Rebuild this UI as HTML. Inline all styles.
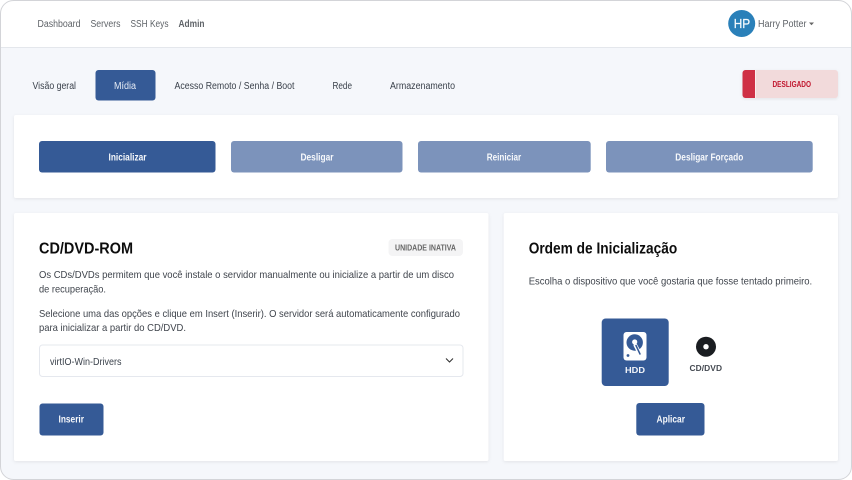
<!DOCTYPE html>
<html lang="pt">
<head>
<meta charset="utf-8">
<title>Mídia</title>
<style>
html,body{margin:0;padding:0;width:852px;height:480px;overflow:hidden;background:#fff}
svg{display:block}
text{font-family:"Liberation Sans",sans-serif;white-space:pre}
.n{font-size:10px;fill:#5f6368}
.t{font-size:10px;fill:#3a414b}
.p{font-size:10.4px;fill:#3f444c}
.b{font-size:9.8px;font-weight:700;fill:#f6f8fb}
.h{font-size:15.5px;font-weight:700;fill:#0d0d0d}
</style>
</head>
<body>
<svg width="852" height="480" viewBox="0 0 852 480" xmlns="http://www.w3.org/2000/svg">
<defs>
<filter id="s" x="-5%" y="-5%" width="110%" height="115%"><feDropShadow dx="0" dy="1" stdDeviation="1.5" flood-color="#000" flood-opacity=".08"/></filter>
<clipPath id="f"><rect x="0.5" y="0.5" width="851" height="479" rx="13"/></clipPath>
</defs>
<rect width="852" height="480" fill="#fff"/>
<g clip-path="url(#f)">
<rect width="852" height="480" fill="#f5f7fb"/>
<rect width="852" height="47" fill="#fff"/>
<rect y="47" width="852" height="1" fill="#e4e7ec"/>
</g>
<rect x="0.5" y="0.5" width="851" height="479" rx="13" fill="none" stroke="#d3d4d8"/>

<text class="n" x="37.5" y="27" textLength="43" lengthAdjust="spacingAndGlyphs">Dashboard</text>
<text class="n" x="90.5" y="27" textLength="30" lengthAdjust="spacingAndGlyphs">Servers</text>
<text class="n" x="130.5" y="27" textLength="38" lengthAdjust="spacingAndGlyphs">SSH Keys</text>
<text class="n" x="178.5" y="27" textLength="26" lengthAdjust="spacingAndGlyphs" font-weight="700">Admin</text>

<circle cx="741.7" cy="23.5" r="13.5" fill="#2a80b9"/>
<text x="733.7" y="28" font-size="13" fill="#f6fafd" stroke="#f6fafd" stroke-width=".25" textLength="16.5" lengthAdjust="spacingAndGlyphs">HP</text>
<text class="n" x="758" y="27" textLength="48.5" lengthAdjust="spacingAndGlyphs">Harry Potter</text>
<path d="M809 22.5h5l-2.5 2.7z" fill="#666"/>

<text class="t" x="32.5" y="89" textLength="43.5" lengthAdjust="spacingAndGlyphs">Visão geral</text>
<rect x="95.5" y="70" width="60" height="30.5" rx="3" fill="#355a96"/>
<text x="114" y="89" font-size="10" fill="#e6ecf5" textLength="22" lengthAdjust="spacingAndGlyphs">Mídia</text>
<text class="t" x="174.5" y="89" textLength="120" lengthAdjust="spacingAndGlyphs">Acesso Remoto / Senha / Boot</text>
<text class="t" x="332.5" y="89" textLength="19.5" lengthAdjust="spacingAndGlyphs">Rede</text>
<text class="t" x="390" y="89" textLength="65" lengthAdjust="spacingAndGlyphs">Armazenamento</text>

<rect x="742.5" y="70" width="95.5" height="28" rx="3" fill="#f2dadb" filter="url(#s)"/>
<path d="M745.5 70H755V98H745.5a3 3 0 0 1-3-3V73a3 3 0 0 1 3-3z" fill="#cf3045"/>
<rect x="755" y="70" width="1" height="28" fill="#fbeeee"/>
<text x="772.5" y="87" font-size="8.4" font-weight="700" fill="#c0142c" textLength="38.5" lengthAdjust="spacingAndGlyphs">DESLIGADO</text>

<rect x="14" y="115" width="824" height="83" rx="2" fill="#fff" filter="url(#s)"/>
<rect x="39" y="141" width="176.5" height="31.5" rx="3" fill="#355a96"/>
<rect x="231" y="141" width="171.5" height="31.5" rx="3" fill="#7c93bb"/>
<rect x="418" y="141" width="172.7" height="31.5" rx="3" fill="#7c93bb"/>
<rect x="606" y="141" width="206.7" height="31.5" rx="3" fill="#7c93bb"/>
<text class="b" x="108.5" y="160.5" textLength="38" lengthAdjust="spacingAndGlyphs">Inicializar</text>
<text class="b" x="300.5" y="160.5" textLength="33" lengthAdjust="spacingAndGlyphs">Desligar</text>
<text class="b" x="486.7" y="160.5" textLength="34.5" lengthAdjust="spacingAndGlyphs">Reiniciar</text>
<text class="b" x="675.3" y="160.5" textLength="68" lengthAdjust="spacingAndGlyphs">Desligar Forçado</text>

<rect x="14" y="213" width="474.5" height="248" rx="2" fill="#fff" filter="url(#s)"/>
<text class="h" x="39" y="253.5" textLength="94" lengthAdjust="spacingAndGlyphs">CD/DVD-ROM</text>
<rect x="388.5" y="239" width="74.5" height="17" rx="4" fill="#f4f4f5"/>
<text x="395" y="250.7" font-size="7.8" font-weight="700" fill="#666" textLength="61" lengthAdjust="spacingAndGlyphs">UNIDADE INATIVA</text>
<text class="p" x="39" y="278" textLength="415" lengthAdjust="spacingAndGlyphs">Os CDs/DVDs permitem que você instale o servidor manualmente ou inicialize a partir de um disco</text>
<text class="p" x="39" y="292.5" textLength="67" lengthAdjust="spacingAndGlyphs">de recuperação.</text>
<text class="p" x="39" y="317" textLength="421" lengthAdjust="spacingAndGlyphs">Selecione uma das opções e clique em Insert (Inserir). O servidor será automaticamente configurado</text>
<text class="p" x="39" y="331" textLength="147" lengthAdjust="spacingAndGlyphs">para inicializar a partir do CD/DVD.</text>
<rect x="39.5" y="345" width="423.5" height="31.5" rx="3" fill="#fff" stroke="#e5e8ee"/>
<text class="t" x="50" y="365" textLength="71.5" lengthAdjust="spacingAndGlyphs">virtIO-Win-Drivers</text>
<path d="M446 358.5l3.5 3.5 3.5-3.5" fill="none" stroke="#333" stroke-width="1.1"/>
<rect x="39.5" y="403.5" width="64" height="32" rx="3" fill="#355a96"/>
<text class="b" x="58.5" y="422.5" textLength="25.5" lengthAdjust="spacingAndGlyphs">Inserir</text>

<rect x="503.7" y="213" width="334.3" height="248" rx="2" fill="#fff" filter="url(#s)"/>
<text class="h" x="528.7" y="253.5" textLength="148.5" lengthAdjust="spacingAndGlyphs">Ordem de Inicialização</text>
<text class="p" x="528.7" y="284.5" textLength="283.5" lengthAdjust="spacingAndGlyphs">Escolha o dispositivo que você gostaria que fosse tentado primeiro.</text>

<rect x="601.7" y="318.5" width="67" height="67.5" rx="4" fill="#355a96"/>
<rect x="623.5" y="332" width="23" height="28.5" rx="3" fill="#fff"/>
<circle cx="634.7" cy="342.5" r="8.2" fill="#355a96"/>
<circle cx="634.7" cy="342" r="2.6" fill="#fff"/>
<path d="M635.5 345.5l5 9.5" stroke="#fff" stroke-width="3.8" stroke-linecap="round"/>
<path d="M636 345.5l4 8.5" stroke="#355a96" stroke-width="1.5" stroke-linecap="round"/>
<circle cx="628" cy="355.5" r="1.4" fill="#355a96"/>
<text x="625" y="373" font-size="8.4" font-weight="700" fill="#f4f6fa" textLength="20" lengthAdjust="spacingAndGlyphs">HDD</text>

<circle cx="706" cy="346.7" r="10" fill="#1a1d21"/>
<circle cx="706" cy="346.7" r="2.7" fill="#fff"/>
<text x="689.5" y="371" font-size="8.4" font-weight="700" fill="#454a52" textLength="32.5" lengthAdjust="spacing">CD/DVD</text>

<rect x="636.3" y="403" width="68.2" height="32.5" rx="3" fill="#355a96"/>
<text class="b" x="656.5" y="422.5" textLength="28.5" lengthAdjust="spacingAndGlyphs">Aplicar</text>
</svg>
</body>
</html>
